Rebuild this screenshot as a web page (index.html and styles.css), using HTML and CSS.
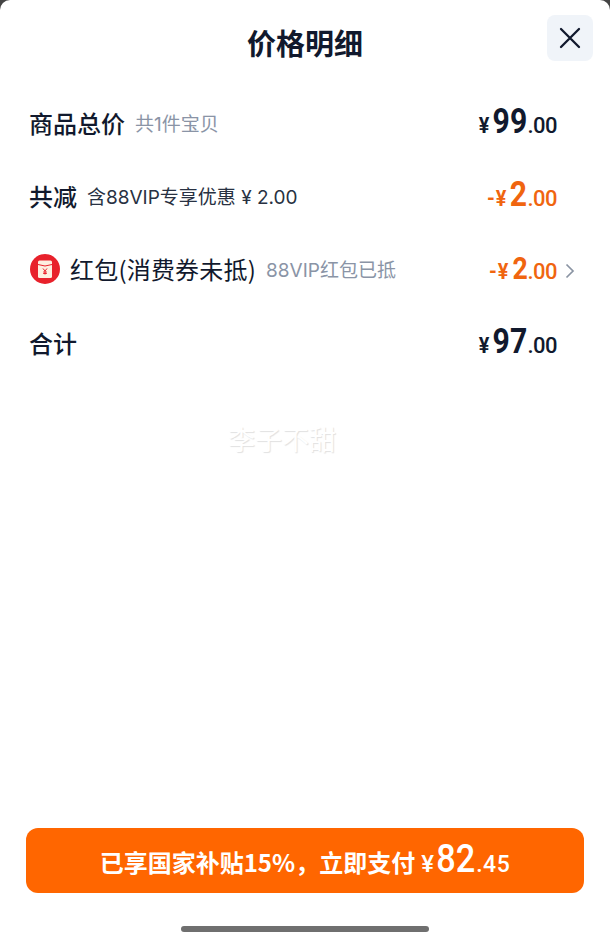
FILE: index.html
```html
<!DOCTYPE html>
<html lang="zh-CN">
<head>
<meta charset="utf-8">
<title>价格明细</title>
<link rel="stylesheet" href="styles.css">
</head>
<body>
<div class="sheet">
  <header class="head">
    <h1 class="title">价格明细</h1>
    <button class="close" aria-label="关闭">
      <svg width="22" height="22" viewBox="0 0 22 22"><path d="M2 2 20 20M20 2 2 20" fill="none" stroke="#11192d" stroke-width="2.300" stroke-linecap="round"/></svg>
    </button>
  </header>
  <main class="rows">
    <div class="row">
      <div class="left"><span class="label strong">商品总价</span><span class="note">共1件宝贝</span></div>
      <div class="price"><span class="yen">¥</span><span class="int two">99</span><span class="dec">.00</span></div>
    </div>
    <div class="row">
      <div class="left"><span class="label strong">共减</span><span class="note dark">含88VIP专享优惠 ¥ 2.00</span></div>
      <div class="price orange"><span class="yen">-¥</span><span class="int">2</span><span class="dec">.00</span></div>
    </div>
    <div class="row">
      <div class="left">
        <svg class="packet" width="30" height="30" viewBox="0 0 30 30"><circle cx="15" cy="15" r="15" fill="#e8212b"/><rect x="8" y="6.500" width="14" height="17.500" rx="1.500" fill="#fdeee0"/><path d="M8 10.500q7 3 14 0" fill="none" stroke="#e8212b" stroke-width="1"/><path d="M13 14.500l2 2.500 2-2.500M15 17v3.500M13.200 18h3.600M13.200 19.500h3.600" fill="none" stroke="#e8212b" stroke-width="1"/></svg>
        <span class="label packet-label">红包(消费券未抵)</span><span class="note">88VIP红包已抵</span>
      </div>
      <div class="price orange small"><span class="yen">-¥</span><span class="int">2</span><span class="dec">.00</span></div>
      <svg class="chev" width="10" height="16" viewBox="0 0 10 16"><path d="M1.500 1.500 8 8l-6.500 6.500" fill="none" stroke="#8a94a3" stroke-width="1.700"/></svg>
    </div>
    <div class="row">
      <div class="left"><span class="label strong">合计</span></div>
      <div class="price"><span class="yen">¥</span><span class="int two">97</span><span class="dec">.00</span></div>
    </div>
  </main>
  <div class="watermark">李子不甜</div>
  <footer class="foot">
    <button class="pay"><span class="pay-text">已享国家补贴15%，立即支付</span><span class="pay-yen">¥</span><span class="pay-int">82</span><span class="pay-dec">.45</span></button>
    <div class="home"></div>
  </footer>
</div>
</body>
</html>
```
FILE: styles.css
```css
* { box-sizing: border-box; margin: 0; padding: 0; }
html, body { width: 610px; height: 944px; overflow: hidden; background: #444; }
body { font-family: "Noto Sans CJK SC", "Roboto", sans-serif; color: #11192d; }
.sheet { position: relative; width: 610px; height: 944px; background: #fff; border-radius: 10px 10px 0 0; display: flex; flex-direction: column; }
.head { height: 86px; padding-bottom: 2px; display: flex; align-items: center; justify-content: center; position: relative; }
.title { font-size: 29px; font-weight: 700; line-height: 40px; }
.close { position: absolute; top: 15px; right: 17px; width: 46px; height: 46px; border: 0; border-radius: 8px; background: #f0f4f9; display: flex; align-items: center; justify-content: center; }
.rows { padding: 0 30px; display: flex; flex-direction: column; }
.row { height: 73.300px; display: flex; align-items: center; justify-content: space-between; padding-right: 23px; position: relative; }
.left { display: flex; align-items: center; margin-left: -1px; }
.label { font-size: 24px; line-height: 32px; }
.packet-label { letter-spacing: .2px; }
.strong { font-weight: 500; }
.note { font-family: "Inter", "Noto Sans CJK SC", sans-serif; font-size: 19px; line-height: 28px; color: #8a94a6; margin-left: 10px; padding-top: 4px; }
.note.dark { color: #283142; }
.packet { margin: 0 10px 0 1px; }
.price { display: flex; align-items: baseline; font-family: "Roboto", sans-serif; font-weight: 700; line-height: 40px; padding-top: 2px; }
.yen { font-size: 22px; letter-spacing: 1px; transform: scaleX(.9); }
.int { display: inline-block; font-size: 35px; margin-left: -1px; transform: scaleX(.86); transform-origin: 100% 50%; }
.int.two { margin-left: -4px; }
.dec { font-family: "Roboto", sans-serif; font-size: 22px; font-weight: 500; letter-spacing: -.5px; }
.orange { color: #f0650f; }
.small .int { font-size: 31px; }
.chev { position: absolute; right: 5px; top: 30px; }
.watermark { position: absolute; left: 228px; top: 422px; font-size: 27px; line-height: 34px; color: #fff; text-shadow: 1px 1px 1px rgba(0,0,0,.12); }
.foot { margin-top: auto; display: flex; flex-direction: column; align-items: center; }
.pay { width: 558px; height: 65px; border: 0; border-radius: 12px; background: #ff6600; color: #fff; display: flex; align-items: baseline; justify-content: center; line-height: 63px; font-family: inherit; }
.pay-text { font-size: 24px; font-weight: 700; }
.pay-yen { font-family: "Roboto", sans-serif; font-size: 24px; font-weight: 500; margin-left: 6px; }
.pay-int { display: inline-block; font-family: "Roboto", sans-serif; font-size: 39px; font-weight: 500; margin-left: -3px; transform: scaleX(.88); transform-origin: 100% 50%; }
.pay-dec { font-family: "Roboto", sans-serif; font-size: 23px; font-weight: 500; letter-spacing: .5px; margin-left: 1px; }
.home { width: 248px; height: 6px; margin: 33px 0 12px; border-radius: 3px; background: #6f6f6f; }
```
